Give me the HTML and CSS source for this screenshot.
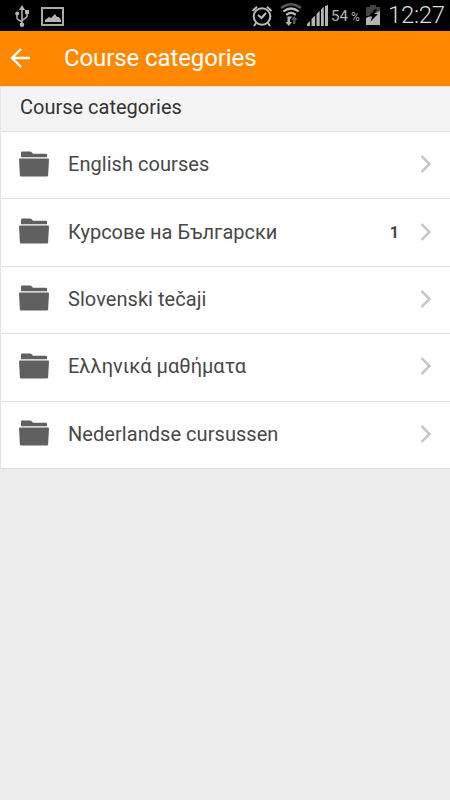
FILE: index.html
```
<!DOCTYPE html>
<html lang="en">
<head>
<meta charset="utf-8">
<title>Course categories</title>
<link rel="stylesheet" href="styles.css">
</head>
<body>
<svg class="defs" width="0" height="0" aria-hidden="true">
  <symbol id="folder" viewBox="0 0 30 26"><path d="M2 6.300V1.800Q2 .6 3 .6h8q1 0 2 1l1 1.200H27q1 0 1 1v2.500z"/><path d="M0 8.300Q0 7.500 1 7.500h28q1 0 1 .8L29.100 24.500q-.1 1-1.100 1H2q-1 0-1.100-1z"/></symbol>
  <symbol id="chevron" viewBox="0 0 12 18"><path d="M1.500 1l8 8-8 8"/></symbol>
</svg>
<div class="status">
  <svg class="usb" viewBox="0 0 14 23"><path d="M7 5v14M2 9v4q0 1 1 1.500l4 2.500M12 8v3q0 1-1 1.700L7 15.500" fill="none" stroke="#aaa" stroke-width="1.600"/><path d="M7 0L10 5H4z"/><circle cx="7" cy="19.700" r="2.300"/><circle cx="2.200" cy="8.500" r="2"/><path d="M10 5h4v4h-4z"/></svg>
  <svg class="photo" viewBox="0 0 23 19"><path d="M1 1h21v17H1z" fill="none" stroke="#aaa" stroke-width="2"/><path d="M4 15v-2l4-3 2 1 4-4 2 3h2l2 3v2z"/></svg>
  <span class="space"></span>
  <svg class="alarm" viewBox="0 0 22 22"><g fill="none" stroke="#bbb" stroke-width="2"><circle cx="11" cy="11.500" r="8.300"/><path d="M1.500 6L6 1.800M20.500 6L16 1.800M5 18l-2 3M17 18l2 3M7 10l3.500 3L15 8"/></g></svg>
  <svg class="wifi" viewBox="0 0 22 24"><g fill="none" stroke="#bbb" stroke-width="2.200"><path stroke="#555" d="M1 5Q11-2.500 21 5"/><path d="M3.300 8.500Q11 2.500 18.700 8.500M6.200 11.800Q11 8 15.800 11.800"/></g><path d="M7.500 13.500h5l-2.500 2.500v3h2l-3.300 4-3.200-4h2z"/><path fill="#555" d="M13 21v-4h-2l3.200-4 3.300 4h-2v4z"/></svg>
  <svg class="signal" viewBox="0 0 21 21"><path d="M0 21v-2l3-3v5zM4.500 21v-7L8 10.500V21zM9.500 21V9l3.200-3.200V21zM14 21V4.500L16.800 1.700V21zM18 21V1l3-1v21z"/></svg>
  <span class="percent">54<small>%</small></span>
  <svg class="battery" viewBox="0 0 14 20"><path fill="#444" d="M4 0h6v2h4v9H0V2h4z"/><path d="M0 13L14 6V20H0z"/><path fill="#000" d="M9 4L2.500 11.500h3.700L4.500 16.500 12 9H8.500L11 4z"/></svg>
  <span class="clock">12:27</span>
</div>
<header class="bar">
  <svg class="back" viewBox="0 0 20 20"><path d="M11 1L2 10l9 9M2 10h18"/></svg>
  <h1>Course categories</h1>
</header>
<main class="list">
  <h2>Course categories</h2>
  <div class="row"><svg class="folder"><use href="#folder"/></svg><span class="name wide">English courses</span><svg class="chevron"><use href="#chevron"/></svg></div>
  <div class="row"><svg class="folder"><use href="#folder"/></svg><span class="name">Курсове на Български</span><span class="count">1</span><svg class="chevron"><use href="#chevron"/></svg></div>
  <div class="row"><svg class="folder"><use href="#folder"/></svg><span class="name wide">Slovenski tečaji</span><svg class="chevron"><use href="#chevron"/></svg></div>
  <div class="row"><svg class="folder"><use href="#folder"/></svg><span class="name">Ελληνικά μαθήματα</span><svg class="chevron"><use href="#chevron"/></svg></div>
  <div class="row"><svg class="folder"><use href="#folder"/></svg><span class="name wide">Nederlandse cursussen</span><svg class="chevron"><use href="#chevron"/></svg></div>
</main>
</body>
</html>
```
FILE: styles.css
```
* { box-sizing: border-box; }
body { margin: 0; height: 800px; background: #ededed; font-family: Roboto, "Noto Sans", sans-serif; overflow: hidden; }
svg { display: block; flex: none; }
.defs { position: absolute; }
.status { display: flex; height: 31px; background: #000; color: #b5b5b5; fill: #b5b5b5; }
.usb { width: 14px; height: 23px; margin: 5px 0 0 15px; }
.photo { width: 23px; height: 19px; margin: 7px 0 0 12px; }
.space { flex: 1; }
.alarm { width: 22px; height: 22px; margin: 5px 7px 0 0; }
.wifi { width: 22px; height: 24px; margin: 3px 5px 0 0; }
.signal { width: 21px; height: 21px; margin: 5px 3px 0 0; }
.percent { width: 35px; font-size: 15px; line-height: 33px; white-space: nowrap; }
.percent small { font-size: 12px; margin-left: 3px; }
.battery { width: 14px; height: 20px; margin: 5px 8px 0 0; }
.clock { width: 62px; font-size: 24px; font-weight: 300; line-height: 31px; letter-spacing: -0.3px; color: #ddd; white-space: nowrap; }
.bar { display: flex; align-items: center; height: 55px; padding-left: 10px; background: #ff8800; color: #fff; }
.back { width: 20px; height: 20px; margin-top: -1px; fill: none; stroke: #fff; stroke-width: 2.4; }
h1 { margin: 0 0 0 34px; font-size: 24px; font-weight: 400; line-height: 55px; letter-spacing: -0.1px; }
.list { border-left: 1px solid #e4e4e4; background: #fff; }
h2 { margin: 0; height: 46px; padding-left: 19px; background: #f4f4f4; border-top: 1px solid #f4d9c2; border-bottom: 1px solid #e0e0e0; font-size: 20px; font-weight: 400; line-height: 41px; color: #333; }
.row { display: flex; align-items: center; height: 67.4px; padding: 0 18px; border-bottom: 1px solid #e0e0e0; color: #484848; }
.folder { width: 30px; height: 26px; margin-top: -3px; fill: #606060; }
.name { flex: 1; margin-left: 19px; font-size: 20px; line-height: 28px; padding-bottom: 2px; white-space: nowrap; }
.wide { letter-spacing: 0.05px; }
.count { margin-right: 21px; font-size: 16px; font-weight: 700; }
.chevron { width: 12px; height: 18px; margin-top: -2px; fill: none; stroke: #c8c8c8; stroke-width: 2.5; }
```
